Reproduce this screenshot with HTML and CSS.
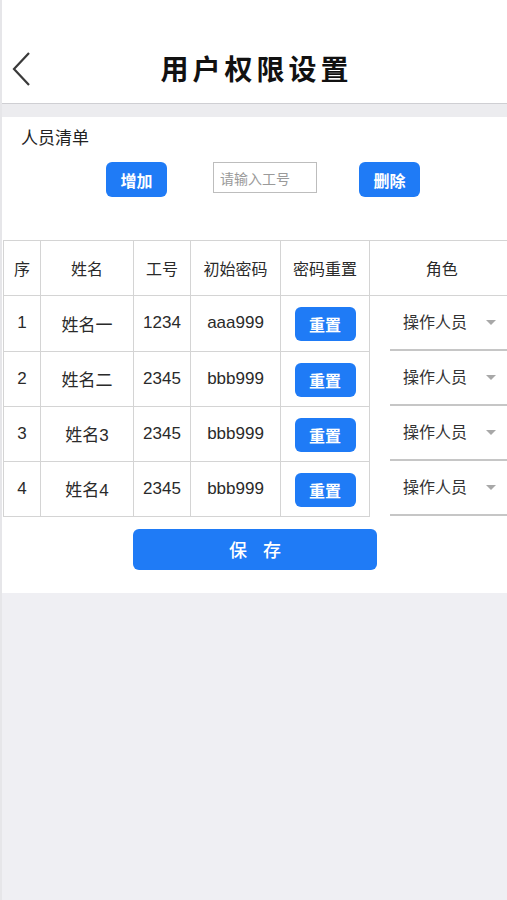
FILE: index.html
```html
<!DOCTYPE html>
<html lang="zh-CN">
<head>
<meta charset="utf-8">
<title>用户权限设置</title>
<link rel="stylesheet" href="styles.css">
</head>
<body>
<div class="app">
  <header class="header">
    <svg class="back" width="20" height="34" viewBox="0 0 20 34"><path d="M17 1 L2 17 L17 33" fill="none" stroke="#3a3a3a" stroke-width="2.2" stroke-linejoin="miter"/></svg>
    <h1 class="title">用户权限设置</h1>
  </header>
  <div class="band"></div>
  <main class="panel">
    <div class="section-title">人员清单</div>
    <div class="toolbar">
      <button class="btn btn-sm">增加</button>
      <input class="input" type="text" placeholder="请输入工号">
      <button class="btn btn-sm">删除</button>
    </div>
    <table class="grid">
      <colgroup>
        <col class="c1"><col class="c2"><col class="c3"><col class="c4"><col class="c5"><col class="c6">
      </colgroup>
      <thead>
        <tr><th>序</th><th>姓名</th><th>工号</th><th>初始密码</th><th>密码重置</th><th class="role-h">角色</th></tr>
      </thead>
      <tbody>
        <tr><td>1</td><td>姓名一</td><td>1234</td><td>aaa999</td><td><button class="btn btn-reset">重置</button></td><td class="role"><div class="select"><span>操作人员</span><i class="caret"></i></div></td></tr>
        <tr><td>2</td><td>姓名二</td><td>2345</td><td>bbb999</td><td><button class="btn btn-reset">重置</button></td><td class="role"><div class="select"><span>操作人员</span><i class="caret"></i></div></td></tr>
        <tr><td>3</td><td>姓名3</td><td>2345</td><td>bbb999</td><td><button class="btn btn-reset">重置</button></td><td class="role"><div class="select"><span>操作人员</span><i class="caret"></i></div></td></tr>
        <tr><td>4</td><td>姓名4</td><td>2345</td><td>bbb999</td><td><button class="btn btn-reset">重置</button></td><td class="role"><div class="select"><span>操作人员</span><i class="caret"></i></div></td></tr>
      </tbody>
    </table>
    <div class="save-row">
      <button class="btn btn-save">保 存</button>
    </div>
  </main>
</div>
</body>
</html>
```

FILE: styles.css
```css
* { box-sizing: border-box; }
html, body { margin: 0; padding: 0; }
body {
  width: 507px;
  height: 900px;
  overflow: hidden;
  background: #e6e6e9;
  font-family: "Liberation Sans", "Noto Sans CJK SC", sans-serif;
  color: #333;
}
.app {
  margin-left: 2px;
  height: 900px;
  background: #efeff3;
}
.header {
  height: 104px;
  background: #fff;
  border-bottom: 1px solid #cfcfd3;
  display: flex;
  justify-content: center;
  align-items: flex-start;
  padding-top: 50px;
  position: relative;
}
.back {
  position: absolute;
  left: 10px;
  top: 52px;
}
.title {
  margin: 0;
  font-family: "Noto Sans CJK SC", sans-serif;
  font-size: 28px;
  font-weight: 700;
  line-height: 36px;
  letter-spacing: 4px;
  color: #111;
  padding-left: 4px;
}
.band {
  height: 13px;
  background: #ececef;
}
.panel {
  background: #fff;
  height: 476px;
  padding-top: 8px;
}
.section-title {
  font-family: "Noto Sans CJK SC", sans-serif;
  font-size: 17px;
  line-height: 24px;
  color: #222;
  padding-left: 19px;
}
.toolbar {
  display: flex;
  align-items: flex-start;
  margin-top: 13px;
  padding-left: 104px;
}
.btn {
  border: none;
  background: #1f7bf6;
  color: #fff;
  font-family: "Noto Sans CJK SC", sans-serif;
  border-radius: 6px;
  padding: 0;
  cursor: pointer;
}
.btn-sm {
  width: 61px;
  height: 35px;
  font-size: 16px;
  font-weight: 700;
}
.input {
  width: 104px;
  height: 31px;
  margin: 0 42px 0 46px;
  border: 1px solid #bdbdbd;
  font-family: "Noto Sans CJK SC", sans-serif;
  font-size: 14px;
  padding: 0 6px;
  color: #333;
  outline: none;
}
.input::placeholder { color: #9a9a9a; }
.grid {
  margin-top: 43px;
  margin-left: 1px;
  border-collapse: collapse;
  table-layout: fixed;
  width: 510px;
  font-size: 17px;
  color: #2a2a2a;
}
.c1 { width: 37px; }
.c2 { width: 93px; }
.c3 { width: 57px; }
.c4 { width: 90px; }
.c5 { width: 89px; }
.c6 { width: 144px; }
.grid th, .grid td {
  border: 1px solid #d4d4d4;
  height: 55px;
  padding: 0;
  text-align: center;
  vertical-align: middle;
  font-weight: 400;
}
.grid th {
  font-family: "Noto Sans CJK SC", sans-serif;
  font-size: 16px;
}
.grid td.role {
  border-top: none;
  border-bottom: none;
  border-right: none;
  vertical-align: bottom;
  padding-left: 20px;
}
.grid th.role-h { border-right: none; }
.btn-reset {
  width: 61px;
  height: 34px;
  font-size: 16px;
  font-weight: 700;
  margin-top: 2px;
}
.select {
  height: 55px;
  border-bottom: 2px solid #c6c6c6;
  display: flex;
  align-items: center;
  padding-left: 13px;
  font-family: "Noto Sans CJK SC", sans-serif;
  font-size: 16px;
  color: #333;
}
.select span { line-height: 20px; margin-top: -3px; }
.caret {
  width: 0;
  height: 0;
  border-left: 5px solid transparent;
  border-right: 5px solid transparent;
  border-top: 5px solid #a8a8a8;
  margin-left: 19px;
}
.save-row {
  margin-top: 12px;
  padding-left: 131px;
}
.btn-save {
  width: 244px;
  height: 41px;
  font-size: 18px;
  font-weight: 500;
  letter-spacing: 6px;
  padding-left: 6px;
}
```
